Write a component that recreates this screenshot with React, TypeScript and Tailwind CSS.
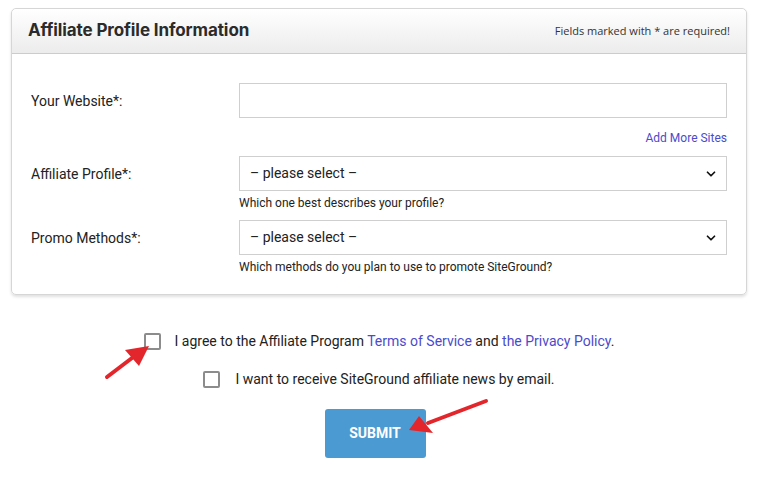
import { ChevronDown } from 'lucide-react';

const roboto = { fontFamily: 'Roboto, "Liberation Sans", sans-serif' };

function SelectField({ help }: { help: string }) {
  return (
    <div className="flex flex-col">
      <div className="relative">
        <select className="h-[35px] w-full appearance-none rounded-none border border-[#cfcfcf] bg-white pl-[10px] text-[14px] text-[#222] outline-none">
          <option>– please select –</option>
        </select>
        <ChevronDown className="pointer-events-none absolute right-[9px] top-[11px] h-[14px] w-[14px] text-[#111]" strokeWidth={3} />
      </div>
      <p className="mt-[4px] text-[12px] leading-[16px] text-[#222]">{help}</p>
    </div>
  );
}

export default function App() {
  return (
    <div className="relative h-[484px] w-[758px] bg-white pt-[8px]" style={roboto}>
      <div className="ml-[11px] w-[736px] rounded-[5px] border border-[#d6d6d6] shadow-[0_2px_3px_rgba(0,0,0,0.12)]">
        <div className="flex h-[45px] items-center justify-between rounded-t-[5px] border-b border-[#cccccc] bg-gradient-to-b from-white to-[#ececec] px-[16px]">
          <h2 className="text-[17px] font-bold tracking-[-0.1px] text-[#2b2b2b]" style={{ fontFamily: 'Inter, "Open Sans", sans-serif' }}>
            Affiliate Profile Information
          </h2>
          <span className="text-[11px] text-[#333]" style={{ fontFamily: '"Open Sans", sans-serif' }}>
            Fields marked with * are required!
          </span>
        </div>

        <div className="grid grid-cols-[208px_1fr] px-[19px] pb-[19px] pt-[29px] text-[#222]">
          <label className="self-start pt-[8px] text-[14px]">Your Website*:</label>
          <div className="flex flex-col">
            <input className="h-[35px] w-full border border-[#cfcfcf] bg-white outline-none" />
            <a className="mt-[12px] self-end text-[12px] leading-[16px] text-[#4b4bcc]">Add More Sites</a>
          </div>

          <label className="mt-[10px] pt-[8px] text-[14px]">Affiliate Profile*:</label>
          <div className="mt-[10px]">
            <SelectField help="Which one best describes your profile?" />
          </div>

          <label className="mt-[9px] pt-[8px] text-[14px]">Promo Methods*:</label>
          <div className="mt-[9px]">
            <SelectField help="Which methods do you plan to use to promote SiteGround?" />
          </div>
        </div>
      </div>

      <div className="mt-[36px] flex flex-col items-center text-[14px] text-[#222]">
        <label className="flex items-center gap-[14px]">
          <span className="h-[17px] w-[17px] rounded-[2px] border-2 border-[#8c8c8c]" />
          <span>
            I agree to the Affiliate Program <a className="text-[#4b4bcc]">Terms of Service</a> and{' '}
            <a className="text-[#4b4bcc]">the Privacy Policy</a>.
          </span>
        </label>
        <label className="mt-[17px] flex items-center gap-[15px]">
          <span className="h-[17px] w-[17px] rounded-[2px] border-2 border-[#8c8c8c]" />
          <span>I want to receive SiteGround affiliate news by email.</span>
        </label>
        <button className="mr-[8px] mt-[19px] h-[49px] w-[101px] rounded-[3px] bg-[#4c9ad2] text-[14px] font-bold text-white">
          SUBMIT
        </button>
      </div>

      <svg className="pointer-events-none absolute left-0 top-0" width="758" height="484">
        <line x1="107" y1="377" x2="132" y2="358" stroke="#e3262b" strokeWidth="4" strokeLinecap="round" />
        <polygon points="149,346 125,350 139,366" fill="#e3262b" />
        <line x1="486" y1="401" x2="428" y2="423" stroke="#e3262b" strokeWidth="4" strokeLinecap="round" />
        <polygon points="409,430 419,416 433,433" fill="#e3262b" />
      </svg>
    </div>
  );
}
